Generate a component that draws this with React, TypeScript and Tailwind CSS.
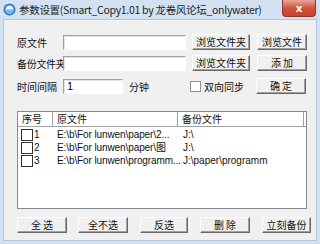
import React from 'react'

const cjk = { fontFamily: '"Noto Sans CJK SC", "Liberation Sans", sans-serif' }
const latin = { fontFamily: '"Liberation Sans", "Noto Sans CJK SC", sans-serif' }

const Btn = ({ label, w }: { label: string; w: string }) => (
  <div
    className={`${w} h-[16px] flex items-center justify-center bg-[#f0f0f0] border border-t-white border-l-white border-b-[#696969] border-r-[#696969] text-[10px] leading-none text-[#111] shadow-[inset_-1px_-1px_0_#a0a0a0]`}
    style={cjk}
  >
    {label}
  </div>
)

const Input = ({ w, value }: { w: string; value?: string }) => (
  <div
    className={`${w} h-[15px] bg-white border border-t-[#a0a0a0] border-l-[#a0a0a0] border-b-white border-r-white shadow-[inset_1px_1px_0_#e3e3e3] text-[11px] leading-[13px] pl-[3px] text-black`}
    style={latin}
  >
    {value}
  </div>
)

const rows = [
  { n: '1', src: 'E:\\b\\For lunwen\\paper\\2...', dst: 'J:\\' },
  { n: '2', src: 'E:\\b\\For lunwen\\paper\\图', dst: 'J:\\' },
  { n: '3', src: 'E:\\b\\For lunwen\\programm...', dst: 'J:\\paper\\programm' },
]

export default function App() {
  return (
    <div className="w-[320px] h-[244px] bg-[#d3e2f2] flex flex-col overflow-hidden" style={cjk}>
      {/* title bar */}
      <div className="h-[19px] flex items-center relative">
        <svg width="13" height="13" viewBox="0 0 13 13" className="ml-[3px]">
          <circle cx="6.5" cy="6.5" r="6" fill="#2f79c8" />
          <circle cx="6.5" cy="6.5" r="4.5" fill="#7fb6ea" />
          <path d="M3 6.5a3.5 3.5 0 0 1 7 0" fill="#e9f3fc" />
        </svg>
        <span className="ml-[3px] text-[10.5px] text-[#1e1e1e] tracking-[-0.3px]">
          参数设置(Smart_Copy1.01 by 龙卷风论坛_onlywater)
        </span>
        <div className="absolute right-[4px] top-0 w-[34px] h-[17px] rounded-b-[4px] bg-gradient-to-b from-[#e8a598] via-[#d0533c] to-[#c8432d] border border-[#8a3a2d] border-t-0 flex items-center justify-center">
          <span className="text-white text-[11px] font-bold leading-none" style={{ fontFamily: '"DejaVu Sans", sans-serif' }}>
            x
          </span>
        </div>
      </div>

      {/* client */}
      <div className="flex-1 mx-[3px] mb-[3px] bg-[#f0f0f0] border border-[#b4c6da] flex flex-col pl-[13px] text-[10px] text-[#111]">
        <div className="flex items-center mt-[14px] h-[16px]">
          <div className="w-[46px]">原文件</div>
          <Input w="w-[123px]" />
          <div className="ml-[6px]"><Btn label="浏览文件夹" w="w-[58px]" /></div>
          <div className="ml-[7px]"><Btn label="浏览文件" w="w-[50px]" /></div>
        </div>
        <div className="flex items-center mt-[5px] h-[16px]">
          <div className="w-[46px] tracking-[-0.3px] whitespace-nowrap">备份文件夹</div>
          <Input w="w-[123px]" />
          <div className="ml-[6px]"><Btn label="浏览文件夹" w="w-[58px]" /></div>
          <div className="ml-[7px]"><Btn label="添 加" w="w-[50px]" /></div>
        </div>
        <div className="flex items-center mt-[7px] h-[16px]">
          <div className="w-[46px]">时间间隔</div>
          <Input w="w-[60px]" value="1" />
          <div className="ml-[6px] w-[61px]">分钟</div>
          <div className="w-[11px] h-[11px] bg-white border border-[#8e8f8f]" />
          <div className="ml-[3px] w-[52px]">双向同步</div>
          <Btn label="确 定" w="w-[50px]" />
        </div>

        {/* list */}
        <div className="mt-[17px] w-[290px] h-[98px] bg-white border border-[#828790] flex flex-col">
          <div className="flex h-[15px] border-b border-[#a0a0a0]">
            <div className="w-[35px] pl-[4px] border-r border-[#a0a0a0] leading-[14px]">序号</div>
            <div className="w-[125px] pl-[4px] border-r border-[#a0a0a0] leading-[14px]">原文件</div>
            <div className="w-[126px] pl-[4px] border-r border-[#a0a0a0] leading-[14px]">备份文件</div>
          </div>
          <div className="flex flex-col pt-[1px] text-[10px]" style={latin}>
            {rows.map((r) => (
              <div key={r.n} className="flex items-center h-[13px]">
                <div className="ml-[3px] w-[12px] h-[12px] border border-[#333] bg-white" />
                <div className="w-[20px] pl-[1px]">{r.n}</div>
                <div className="w-[125px] pl-[4px] whitespace-nowrap tracking-[-0.1px]">{r.src}</div>
                <div className="pl-[5px] whitespace-nowrap">{r.dst}</div>
              </div>
            ))}
          </div>
        </div>

        {/* bottom buttons */}
        <div className="flex items-center mt-[8px]">
          <Btn label="全 选" w="w-[50px]" />
          <div className="ml-[11px]"><Btn label="全不选" w="w-[50px]" /></div>
          <div className="ml-[12px]"><Btn label="反选" w="w-[48px]" /></div>
          <div className="ml-[12px]"><Btn label="删 除" w="w-[50px]" /></div>
          <div className="ml-[12px]"><Btn label="立刻备份" w="w-[49px]" /></div>
        </div>
      </div>
    </div>
  )
}
